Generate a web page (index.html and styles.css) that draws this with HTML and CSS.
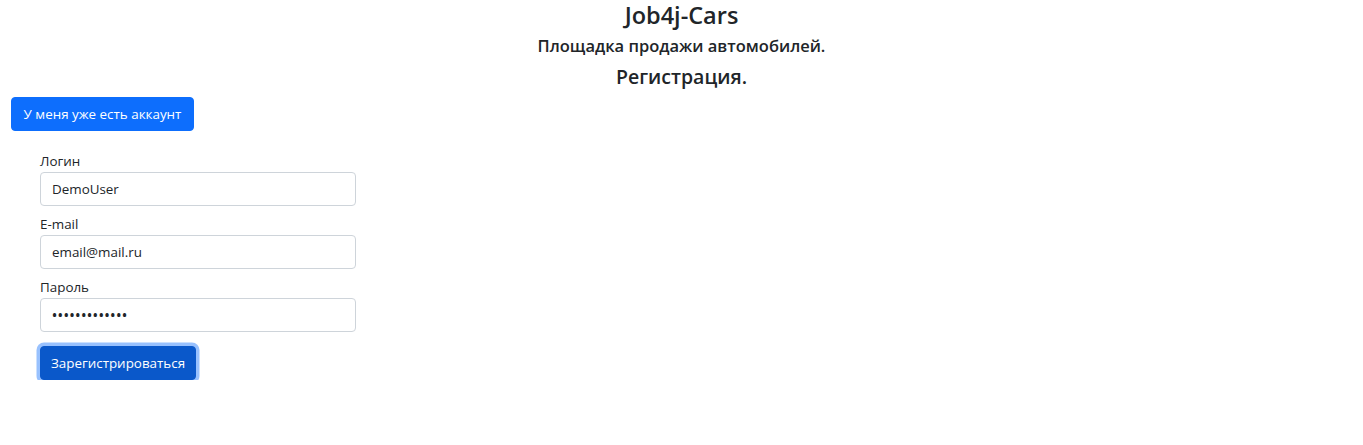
FILE: index.html
```html
<!DOCTYPE html>
<html lang="ru">
<head>
<meta charset="utf-8">
<title>Job4j-Cars</title>
<link rel="stylesheet" href="styles.css">
</head>
<body>
<div class="page">
  <header class="header">
    <h1 class="title">Job4j-Cars</h1>
    <h2 class="subtitle">Площадка продажи автомобилей.</h2>
    <h3 class="section">Регистрация.</h3>
  </header>
  <div class="actions">
    <a class="btn btn-primary" href="#">У меня уже есть аккаунт</a>
  </div>
  <form class="form">
    <div class="field">
      <label class="label" for="login">Логин</label>
      <input class="input" id="login" type="text" value="DemoUser">
    </div>
    <div class="field">
      <label class="label" for="email">E-mail</label>
      <input class="input" id="email" type="text" value="email@mail.ru">
    </div>
    <div class="field">
      <label class="label" for="password">Пароль</label>
      <input class="input input-password" id="password" type="password" value="DemoPassword1">
    </div>
    <button class="btn btn-submit" type="button">Зарегистрироваться</button>
  </form>
</div>
</body>
</html>
```
FILE: styles.css
```css
* { box-sizing: border-box; }
html, body { margin: 0; padding: 0; background: #fff; }
body {
  font-family: "Open Sans", "Noto Sans", sans-serif;
  font-size: 13.4px;
  line-height: 1.5;
  color: #212529;
}
.page { padding: 0 11px; }
.header { text-align: center; }
.title {
  margin: 0;
  font-size: 23.5px;
  font-weight: 600;
  line-height: 30px;
}
.subtitle {
  margin: 3px 0 0;
  font-size: 16.5px;
  font-weight: 600;
  line-height: 26px;
}
.section {
  margin: 3px 0 0;
  font-size: 19.5px;
  font-weight: 600;
  line-height: 30px;
}
.actions { margin-top: 5px; display: flex; }
.btn {
  display: inline-flex;
  align-items: center;
  justify-content: center;
  height: 34px;
  padding: 0 11px;
  border: 1px solid transparent;
  border-radius: 4px;
  font-family: inherit;
  font-size: 13.4px;
  color: #fff;
  text-decoration: none;
  white-space: nowrap;
  cursor: pointer;
}
.btn-primary { background: #0d6efd; border-color: #0d6efd; width: 183px; }
.form {
  margin: 19px 0 0 29px;
  width: 316px;
  display: flex;
  flex-direction: column;
}
.field { display: flex; flex-direction: column; margin-bottom: 7px; }
.label { line-height: 22px; font-size: 13.4px; }
.input {
  height: 34px;
  width: 100%;
  padding: 0 11px;
  border: 1px solid #ced4da;
  border-radius: 4px;
  font-family: inherit;
  font-size: 13.4px;
  color: #212529;
  background: #fff;
}
.input-password { letter-spacing: 0.8px; font-weight: 600; }
.btn-submit {
  margin-top: 7px;
  width: 156px;
  background: #0a58ca;
  border-color: #0a58ca;
  box-shadow: 0 0 0 3.5px rgba(49, 132, 253, 0.5);
}
```
